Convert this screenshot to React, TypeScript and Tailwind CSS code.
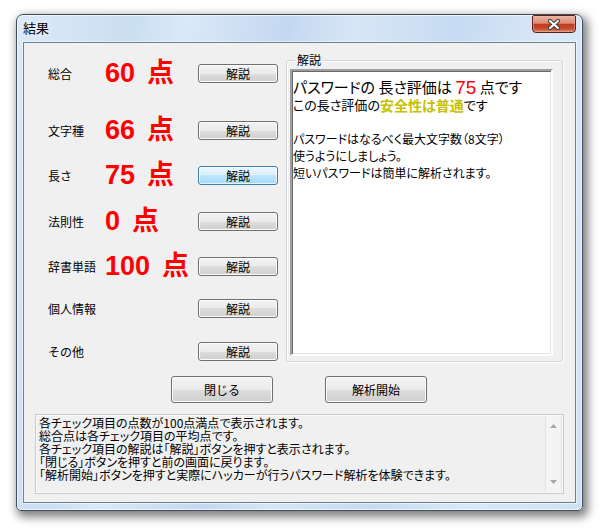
import clsx from "clsx";

const rows = [
  { label: "総合", score: "60", mt: "mt-[21px]", active: false },
  { label: "文字種", score: "66", mt: "mt-[38px]", active: false },
  { label: "長さ", score: "75", mt: "mt-[26px]", active: true },
  { label: "法則性", score: "0", mt: "mt-[27px]", active: false },
  { label: "辞書単語", score: "100", mt: "mt-[26px]", active: false },
  { label: "個人情報", score: null, mt: "mt-[23px]", active: false },
  { label: "その他", score: null, mt: "mt-[24px]", active: false },
];

const notes = [
  "各チェック項目の点数が100点満点で表示されます。",
  "総合点は各チェック項目の平均点です。",
  "各チェック項目の解説は「解説」ボタンを押すと表示されます。",
  "「閉じる」ボタンを押すと前の画面に戻ります。",
  "「解析開始」ボタンを押すと実際にハッカーが行うパスワード解析を体験できます。",
];

function VistaButton({
  children,
  className,
  active,
}: {
  children: React.ReactNode;
  className?: string;
  active?: boolean;
}) {
  return (
    <button
      className={clsx(
        "flex items-center justify-center rounded-[3px] border text-[12px] leading-none text-black",
        active
          ? "border-[#3c7fb1] bg-[linear-gradient(to_bottom,#eaf6fd_0%,#d9f0fc_50%,#bee6fd_50%,#a7d9f5_100%)] shadow-[inset_0_0_0_1px_#ffffffb0]"
          : "border-[#707070] bg-[linear-gradient(to_bottom,#f2f2f2_0%,#ebebeb_50%,#dddddd_50%,#cfcfcf_100%)] shadow-[inset_0_0_0_1px_#fcfcfc]",
        className
      )}
    >
      {children}
    </button>
  );
}

function CloseButton() {
  return (
    <div className="flex h-[18px] w-[44px] items-center justify-center rounded-b-[4px] rounded-t-[2px] border border-[#5a2016] bg-[linear-gradient(to_bottom,#eab5a5_0%,#dc8c74_45%,#c23a1d_52%,#c54a2f_78%,#db8a70_100%)] shadow-[inset_0_0_0_1px_#f0b8a880]">
      <svg width="14" height="11" viewBox="0 0 14 11">
        <path d="M3 2 L11 9 M11 2 L3 9" stroke="#3b3b3b" strokeWidth="4.2" strokeLinecap="round" />
        <path d="M3 2 L11 9 M11 2 L3 9" stroke="#ffffff" strokeWidth="2.2" strokeLinecap="round" />
      </svg>
    </div>
  );
}

export default function App() {
  return (
    <div className="h-[530px] w-[601px] overflow-hidden bg-white pl-[16px] pt-[14px] font-['Noto_Sans_CJK_JP',sans-serif] text-black">
      <div className="flex h-[497px] w-[567px] flex-col rounded-b-[5px] rounded-t-[7px] border border-[#3f4d5c] bg-[linear-gradient(100deg,#dce9f7_0%,#cadef2_18%,#dbe8f7_26%,#c3d8f0_42%,#d7e6f6_52%,#c6dbf2_68%,#dae8f7_82%,#cfe2f5_100%)] shadow-[3px_4px_10px_2px_rgba(0,0,0,0.5),inset_0_0_0_1px_#ffffffa0]">
        {/* title bar */}
        <div className="flex h-[27px] items-start justify-between pl-[6px] pr-[6px]">
          <span className="mt-[4px] text-[13px] leading-[18px] [text-shadow:0_0_6px_#ffffff]">結果</span>
          <CloseButton />
        </div>

        {/* client area */}
        <div className="mx-[6px] flex h-[461px] flex-col border border-[#6f8091] bg-[#f0f0f0] shadow-[0_0_0_1px_#ffffff80]">
          <div className="flex items-start">
            {/* score rows */}
            <div className="flex w-[262px] flex-col pl-[24px]">
              {rows.map((row) => (
                <div key={row.label} className={clsx("flex h-[19px] items-center", row.mt)}>
                  <span className="w-[57px] text-[12px] leading-none">{row.label}</span>
                  <span className="flex w-[93px] items-center font-['Liberation_Sans','Noto_Sans_CJK_JP',sans-serif] text-[27px] font-bold leading-none text-[#ff0000]">
                    {row.score !== null && (
                      <>
                        <span>{row.score}</span>
                        <span className="ml-[12px]">点</span>
                      </>
                    )}
                  </span>
                  <VistaButton active={row.active} className="h-[19px] w-[80px]">
                    解説
                  </VistaButton>
                </div>
              ))}
            </div>

            {/* explanation group */}
            <fieldset className="mt-[10px] w-[277px] rounded-[3px] border border-[#cdd5dc] pb-[5px] pl-[3px] shadow-[inset_1px_1px_0_#ffffff,1px_1px_0_#ffffff]">
              <legend className="ml-[5px] px-[2px] text-[12px] leading-[14px]">解説</legend>
              <div className="mt-[2px] h-[287px] w-[263px] border-2 border-b-white border-l-[#a0a0a0] border-r-white border-t-[#a0a0a0] bg-white pl-[1px] pt-[6px] shadow-[inset_1px_1px_0_#696969,inset_-1px_-1px_0_#e3e3e3] [font-feature-settings:'palt']">
                <div className="flex h-[20px] items-center whitespace-pre text-[15px]">
                  <span>パスワードの 長さ評価は </span>
                  <span className="font-['Liberation_Sans',sans-serif] text-[19px] leading-none text-[#ff0000]">75</span>
                  <span> 点です</span>
                </div>
                <div className="flex h-[16px] items-center text-[13px]">
                  <span>この長さ評価の</span>
                  <span className="text-[14px] font-bold text-[#c6c000]">安全性は普通</span>
                  <span>です</span>
                </div>
                <div className="h-[17px]" />
                <div className="text-[12px] leading-[17px]">
                  <p>パスワードはなるべく最大文字数（8文字）</p>
                  <p>使うようにしましょう。</p>
                  <p>短いパスワードは簡単に解析されます。</p>
                </div>
              </div>
            </fieldset>
          </div>

          {/* dialog buttons */}
          <div className="mt-[14px] flex gap-[52px] pl-[147px]">
            <VistaButton className="h-[27px] w-[102px]">閉じる</VistaButton>
            <VistaButton className="h-[27px] w-[102px]">解析開始</VistaButton>
          </div>

          {/* notes box */}
          <div className="ml-[11px] mt-[11px] flex h-[80px] w-[529px] border border-[#c6c9ce] bg-[#f0f0f0] shadow-[inset_0_0_0_1px_#fafafa]">
            <div className="flex-1 pl-[3px] pt-[1px] text-[12px] leading-[13px] [font-feature-settings:'palt']">
              {notes.map((line) => (
                <p key={line} className="h-[13px]">{line}</p>
              ))}
            </div>
            <div className="my-[1px] mr-[1px] flex w-[17px] flex-col items-center justify-between border-x border-[#e2e2e2] bg-[#f4f4f4] py-[8px]">
              <svg width="7" height="4" viewBox="0 0 7 4">
                <path d="M0 4 L3.5 0 L7 4 Z" fill="#a6a6a6" />
              </svg>
              <svg width="7" height="4" viewBox="0 0 7 4">
                <path d="M0 0 L3.5 4 L7 0 Z" fill="#a6a6a6" />
              </svg>
            </div>
          </div>
        </div>
      </div>
    </div>
  );
}
